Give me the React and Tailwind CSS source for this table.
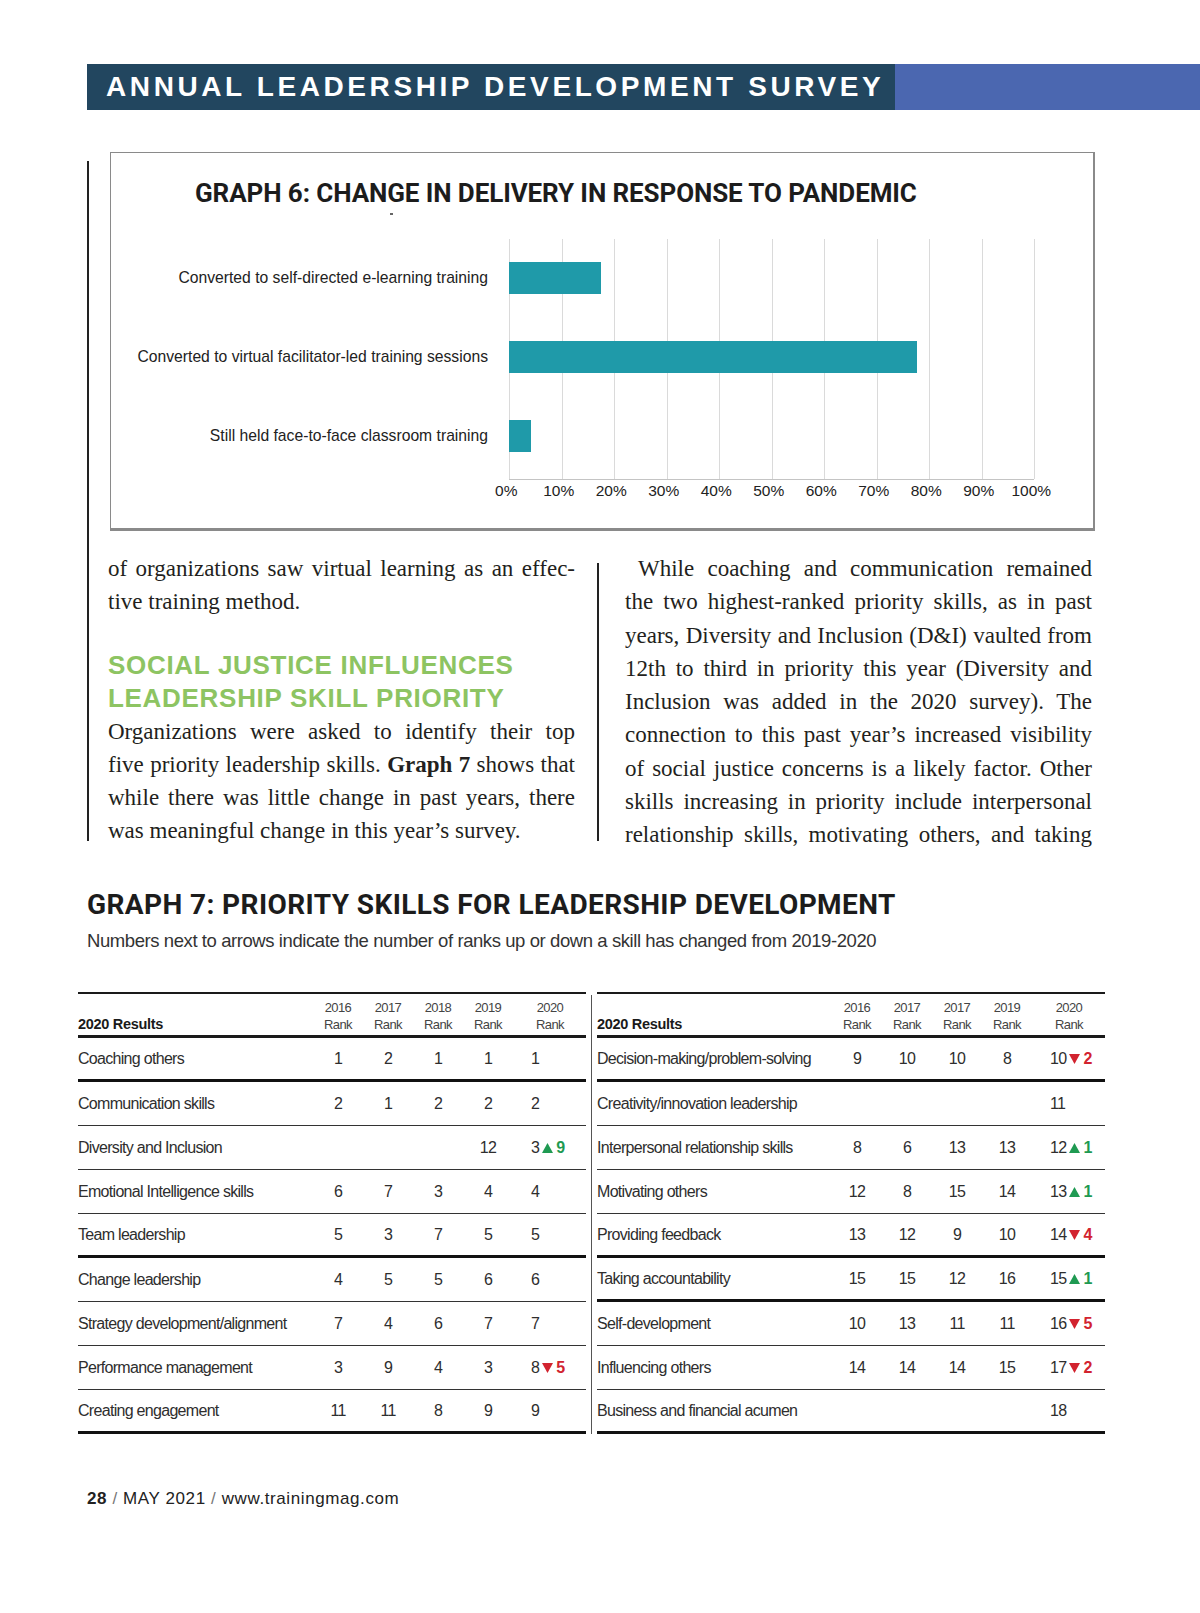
const sans = "font-['Liberation_Sans',Arial,sans-serif]"
const robo = "font-['Roboto','Liberation_Sans',sans-serif]"
const serif = "font-['Liberation_Serif','Times_New_Roman',serif]"

const bars = [
  { label: 'Converted to self-directed e-learning training', pct: 17.6 },
  { label: 'Converted to virtual facilitator-led training sessions', pct: 77.7 },
  { label: 'Still held face-to-face classroom training', pct: 4.1 },
]

const ticks = ['0%', '10%', '20%', '30%', '40%', '50%', '60%', '70%', '80%', '90%', '100%']

const leftRows = [
  ['Coaching others', '1', '2', '1', '1', '1', null, true],
  ['Communication skills', '2', '1', '2', '2', '2', null, false],
  ['Diversity and Inclusion', '', '', '', '12', '3', ['up', 9], false],
  ['Emotional Intelligence skills', '6', '7', '3', '4', '4', null, false],
  ['Team leadership', '5', '3', '7', '5', '5', null, true],
  ['Change leadership', '4', '5', '5', '6', '6', null, false],
  ['Strategy development/alignment', '7', '4', '6', '7', '7', null, false],
  ['Performance management', '3', '9', '4', '3', '8', ['down', 5], false],
  ['Creating engagement', '11', '11', '8', '9', '9', null, true],
]

const rightRows = [
  ['Decision-making/problem-solving', '9', '10', '10', '8', '10', ['down', 2], true],
  ['Creativity/innovation leadership', '', '', '', '', '11', null, false],
  ['Interpersonal relationship skills', '8', '6', '13', '13', '12', ['up', 1], false],
  ['Motivating others', '12', '8', '15', '14', '13', ['up', 1], false],
  ['Providing feedback', '13', '12', '9', '10', '14', ['down', 4], true],
  ['Taking accountability', '15', '15', '12', '16', '15', ['up', 1], true],
  ['Self-development', '10', '13', '11', '11', '16', ['down', 5], false],
  ['Influencing others', '14', '14', '14', '15', '17', ['down', 2], false],
  ['Business and financial acumen', '', '', '', '', '18', null, true],
]

function Change({ dir, n }) {
  const up = dir === 'up'
  return (
    <span className={`inline-flex items-center ml-[3px] font-bold ${up ? 'text-[#1f9a52]' : 'text-[#d2232f]'}`}>
      <svg width="11" height="10" viewBox="0 0 11 10" className="mr-[3px]">
        {up
          ? <polygon points="5.5,0 11,10 0,10" fill="#1f9a52" />
          : <polygon points="0,0 11,0 5.5,10" fill="#d2232f" />}
      </svg>
      {n}
    </span>
  )
}

function SkillTable({ rows, years }) {
  return (
    <div className={`w-[508px] ${sans}`}>
      <div className="flex items-end h-[46px] border-t-2 border-b-[3px] border-[#1a1a1a] pb-[2px]">
        <div className="w-[235px] font-bold text-[14.5px] leading-[17px] text-[#1a1a1a] tracking-[-0.3px]">2020 Results</div>
        {years.map((y, i) => (
          <div key={i} className="w-[50px] text-center text-[13px] leading-[17px] text-[#444] tracking-[-0.6px]">
            {y}<br />Rank
          </div>
        ))}
        <div className="flex-1 pl-[23px] flex">
          <div className="text-center text-[13px] leading-[17px] text-[#444] tracking-[-0.6px]">2020<br />Rank</div>
        </div>
      </div>
      {rows.map(([name, a, b, c, d, now, change, thick]) => (
        <div key={name}
          className={`flex items-center h-[44px] pt-[2px] text-[16px] text-[#2e2e2e] tracking-[-0.7px] ${thick ? 'border-b-[3px] border-[#111]' : 'border-b border-[#333]'}`}>
          <div className="w-[235px] whitespace-nowrap">{name}</div>
          {[a, b, c, d].map((v, i) => (
            <div key={i} className="w-[50px] text-center">{v}</div>
          ))}
          <div className="flex-1 pl-[18px] flex items-center">
            {now}
            {change && <Change dir={change[0]} n={change[1]} />}
          </div>
        </div>
      ))}
    </div>
  )
}

function Line({ children, last, indent }) {
  return (
    <div className={`whitespace-nowrap ${last ? 'text-left' : 'text-justify [text-align-last:justify]'} ${indent ? 'pl-[13px]' : ''}`}>
      {children}
    </div>
  )
}

export default function App() {
  return (
    <div className="w-[1200px] min-h-[1613px] bg-white pt-[64px] pb-[96px]">
      {/* banda del título */}
      <div className="flex h-[46px]">
        <div className="ml-[87px] w-[808px] bg-[#22465f] flex items-center pl-[19px]">
          <span className={`${sans} font-bold text-white text-[28px] tracking-[3.6px] leading-none`}>
            ANNUAL LEADERSHIP DEVELOPMENT SURVEY
          </span>
        </div>
        <div className="flex-1 bg-[#4b67b0]" />
      </div>

      <div className="flex ml-[87px] mt-[42px]">
        <div className="w-[2px] bg-[#222] mt-[9px] h-[680px]" />

        <div className="ml-[21px]">
          {/* Graph 6 */}
          <div className="w-[985px] h-[379px] border border-[#8a8a8a] border-r-2 border-b-[3px] pt-[25px]">
            <h3 className={`${robo} font-bold text-[26px] leading-[30px] tracking-[-0.1px] text-[#1c1c1c] pl-[84px]`}>
              GRAPH 6: CHANGE IN DELIVERY IN RESPONSE TO PANDEMIC
            </h3>
            <div className="ml-[279px] mt-[5px] w-[3px] h-[2px] bg-[#666]" />

            <div className="flex mt-[24px]">
              <div className={`w-[377px] pt-[23px] flex flex-col gap-[47px] ${sans} text-[15.7px] text-[#222]`}>
                {bars.map(b => (
                  <div key={b.label} className="h-[32px] flex items-center justify-end whitespace-nowrap">{b.label}</div>
                ))}
              </div>
              <div className="ml-[21px] w-[525px]">
                <div className="relative h-[241px] border-b border-[#c4c4c4]">
                  {ticks.map((t, i) => (
                    <div key={t} className="absolute top-0 bottom-0 w-px bg-[#dadada]" style={{ left: `${i * 10}%` }} />
                  ))}
                  <div className="relative pt-[23px] flex flex-col gap-[47px]">
                    {bars.map(b => (
                      <div key={b.label} className="h-[32px] bg-[#1f9aa9]" style={{ width: `${b.pct}%` }} />
                    ))}
                  </div>
                </div>
                <div className={`flex -ml-[29px] mt-[2px] ${sans} text-[15.5px] leading-[18px] text-[#222]`}>
                  {ticks.map(t => (
                    <div key={t} className="w-[52.5px] shrink-0 text-center">{t}</div>
                  ))}
                </div>
              </div>
            </div>
          </div>

          {/* texto a dos columnas */}
          <div className={`flex -ml-[2px] mt-[21px] ${serif} text-[23px] leading-[33.3px] text-[#231f20]`}>
            <div className="w-[467px]">
              <Line>of organizations saw virtual learning as an effec-</Line>
              <Line last>tive training method.</Line>
              <h4 className={`${sans} font-bold text-[26px] leading-[33px] tracking-[0.7px] text-[#8dc462] mt-[30px]`}>
                SOCIAL JUSTICE INFLUENCES<br />LEADERSHIP SKILL PRIORITY
              </h4>
              <Line>Organizations were asked to identify their top</Line>
              <Line>five priority leadership skills. <b>Graph 7</b> shows that</Line>
              <Line>while there was little change in past years, there</Line>
              <Line last>was meaningful change in this year’s survey.</Line>
            </div>
            <div className="ml-[22px] mt-[11px] w-[2px] h-[278px] bg-[#222]" />
            <div className="ml-[26px] w-[467px]">
              <Line indent>While coaching and communication remained</Line>
              <Line>the two highest-ranked priority skills, as in past</Line>
              <Line>years, Diversity and Inclusion (D&amp;I) vaulted from</Line>
              <Line>12th to third in priority this year (Diversity and</Line>
              <Line>Inclusion was added in the 2020 survey). The</Line>
              <Line>connection to this past year’s increased visibility</Line>
              <Line>of social justice concerns is a likely factor. Other</Line>
              <Line>skills increasing in priority include interpersonal</Line>
              <Line>relationship skills, motivating others, and taking</Line>
            </div>
          </div>
        </div>
      </div>

      {/* Graph 7 */}
      <div className="ml-[87px] mt-[38px]">
        <h3 className={`${robo} font-bold text-[28px] leading-[30px] tracking-[0.4px] text-[#1c1c1c]`}>
          GRAPH 7: PRIORITY SKILLS FOR LEADERSHIP DEVELOPMENT
        </h3>
        <p className={`${sans} text-[18.5px] leading-[22px] tracking-[-0.42px] text-[#333] mt-[10px]`}>
          Numbers next to arrows indicate the number of ranks up or down a skill has changed from 2019-2020
        </p>
      </div>

      <div className="flex ml-[78px] mt-[40px]">
        <SkillTable rows={leftRows} years={['2016', '2017', '2018', '2019']} />
        <div className="ml-[5px] mt-[3px] w-px bg-[#555]" />
        <div className="ml-[5px]">
          <SkillTable rows={rightRows} years={['2016', '2017', '2017', '2019']} />
        </div>
      </div>

      <div className={`ml-[87px] mt-[55px] ${sans} text-[17px] leading-[20px] tracking-[0.6px] text-[#222]`}>
        <b>28</b> <span className="text-[#777]">/</span> MAY 2021 <span className="text-[#777]">/</span> www.trainingmag.com
      </div>
    </div>
  )
}
